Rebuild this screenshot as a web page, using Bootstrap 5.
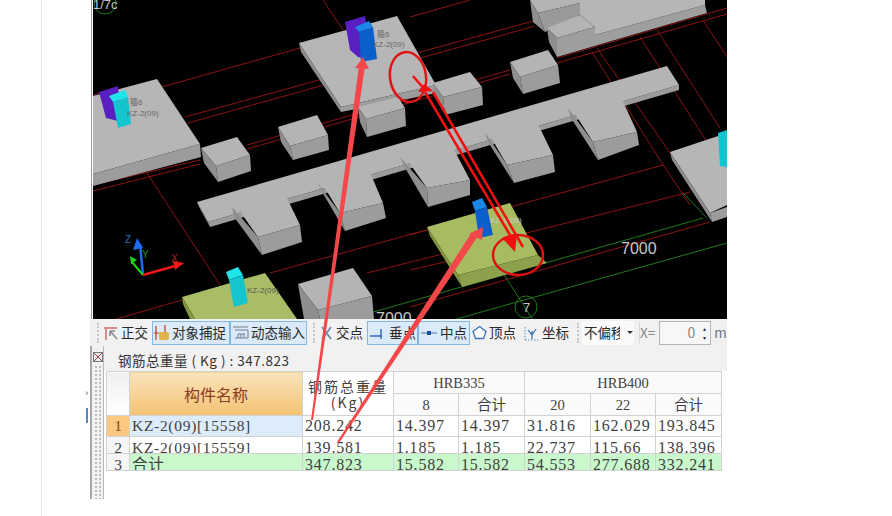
<!DOCTYPE html>
<html lang="zh-CN">

<head>
    <meta charset="UTF-8">
    <meta name="viewport" content="width=device-width, initial-scale=1.0">
    <title>钢筋总重量</title>
    <link href="https://cdn.jsdelivr.net/npm/bootstrap@5.3.0/dist/css/bootstrap.min.css" rel="stylesheet">
    <style>
        body { background: #fff; overflow: hidden; font-family: "Noto Sans CJK SC", "Liberation Sans", sans-serif; }
        .page-wrap { width: 892px; height: 516px; position: relative; }
        .left-gutter { width: 42px; border-right: 1px solid #e8e8e8; }
        .side-rail { width: 48px; padding-top: 388px; }
        .rail-arrow { font-size: 9px; line-height: 10px; color: #444; margin-right: 2px; height: 16px; }
        .rail-tick { width: 2px; height: 15px; background: #5b86bd; margin-right: 2px; margin-top: 4px; }
        .app-pane { width: 637px; height: 499px; overflow: hidden; background: #fff; }
        .scene-box { height: 319px; margin-left: 1px; border-left: 1px solid #9a9a9a; padding-left: 1px; background: #fff; }
        .scene-box svg { display: block; background: #000; }
        .scene-box text { font-family: "Liberation Sans", "Noto Sans CJK SC", sans-serif; }
        .tool-row { height: 27px; background: #f1f1f1; padding-left: 7px; color: #2a2a2a; font-size: 13.5px; white-space: nowrap; overflow: hidden; }
        .grip { width: 3px; height: 20px; border-left: 2px dotted #c4c4c4; flex: none; }
        .tool-item { height: 24px; display: inline-flex; align-items: center; gap: 2px; padding: 0 1px; font-size: 13.5px; line-height: 1; color: #2a2a2a; border: 1px solid transparent; flex: none; }
        .tool-on { background: #dbeaf8; border-color: #82b8e6; }
        .w-catch { width: 78px; }
        .w-input { width: 77px; }
        .w-foot { width: 51px; }
        .w-mid { width: 52px; }
        .sp-1 { margin-left: 1px; }
        .sp-2 { margin-left: 2px; }
        .sp-3 { margin-left: 3px; }
        .sp-4 { margin-left: 4px; }
        .sp-5 { margin-left: 5px; }
        .sp-6 { margin-left: 6px; }
        .offset-pick { width: 52px; height: 24px; background: #fafafa; padding-left: 2px; overflow: hidden; flex: none; }
        .offset-pick span { width: 36px; overflow: hidden; flex: none; }
        .offset-pick i { border-top: 3px solid #333; border-left: 3px solid transparent; border-right: 3px solid transparent; margin-left: 7px; }
        .x-label { border-left: 1px solid #d8d8d8; color: #8a8a8a; }
        .spin-box { width: 52px; height: 24px; border: 1px solid #b5b5b5; background: #f7f7f7; color: #888; font-size: 14px; flex: none; }
        .spin-arrows { width: 11px; font-size: 6px; line-height: 9px; color: #333; text-align: center; }
        .body-pane { height: 153px; }
        .dot-strip { width: 14px; background: #f1f1f1; border-left: 2px solid #a8a8a8; border-right: 1px solid #b8b8b8; flex: none; }
        .dot-fill { flex: 1; margin: 0 2px; background-image: radial-gradient(#bdbdbd 1px, transparent 1px); background-size: 4px 4px; }
        .strip-icon { height: 19px; padding-top: 6px; }
        .sum-title { height: 25px; background: #f1f1f1; font-size: 13.5px; padding-left: 14px; color: #333; letter-spacing: .5px; padding-top: 4px; width: 623px; line-height: 20px; }
        .sheet-wrap { padding-left: 2px; background: #fff; height: 128px; }
        .sheet { width: 615px; table-layout: fixed; font-family: "Liberation Serif", "Noto Sans CJK SC", serif; border-color: #d2d2d2; margin: 0; }
        .sheet > :not(caption) > * > * { padding: 0; font-size: 15.5px; color: #3f3f3f; line-height: 20px; text-align: center; vertical-align: middle; }
        .sheet td.num-cell { text-align: left; padding-left: 2px; font-size: 16px; letter-spacing: .8px; }
        .sheet td.label-cell { text-align: left; padding-left: 2px; letter-spacing: .7px; }
        .sheet tbody tr { height: 20px; }
        .sheet tbody tr.clip-row { height: 16px; }
        .sheet .clip-cell { height: 16px; overflow: hidden; line-height: 22px; }
        .sheet .blank-head { background: linear-gradient(#f0f0f0, #fff); }
        .sheet .name-head { background: linear-gradient(#fbe3ba, #f3c274); color: #8c3c20; font-size: 16px; font-family: "Noto Sans CJK SC", sans-serif; }
        .sheet .total-head { background: #fff; font-size: 14px; line-height: 16px; font-family: "Noto Sans CJK SC", serif; letter-spacing: 2px; }
        .sheet .group-head { background: #fafafa; font-size: 14.5px; }
        .sheet .row-active { background: #fcc983; color: #8c3c20; }
        .sheet .row-index { background: #f6f6f6; }
        .sheet .name-active { background: #dcecfb; }
        .sheet .sum-row { background: #c9f8cd; }
        .note-layer { position: absolute; top: 0; left: 0; pointer-events: none; }
    </style>
</head>

<body>
    <div class="page-wrap d-flex">
        <div class="left-gutter"></div>
        <div class="side-rail d-flex flex-column align-items-end">
            <div class="rail-arrow">›</div>
            <div class="rail-tick"></div>
        </div>
        <div class="app-pane">
            <!-- vista 3D -->
            <div class="scene-box">
                <svg width="634" height="319" viewBox="93 0 634 319">
                    <!-- rejilla -->
                    <g stroke="#8c1414" stroke-width="1" fill="none">
                        <path d="M162 87L300 48M185 117L533 21M188 123L535 26M247 145L510 70M247 149L510 74M323 0L343 30M410 17L470 0" />
                        <path d="M557 58L727 8M557 63L727 14M592 52L660 160M597 48L675 160M640 37L707 142M657 30L720 128M703 20L727 57" />
                        <path d="M147 173L220 285M93 185L200 160M93 191L200 164M270 273L663 165M367 273L690 192M410 235L427 230M410 270L453 260M113 320L182 300M410 307L710 222" />
                        <path d="M93 96L100 92M690 190L727 180M660 160L690 205" />
                    </g>
                    <g stroke="#1f7a1f" stroke-width="1" fill="none">
                        <path d="M370 313L703 218M453 320L727 243M503 273L533 320M683 193L707 218M280 300L300 325" />
                        <circle cx="526" cy="307" r="11" />
                        <circle cx="105" cy="3" r="11" />
                    </g>
                    <!-- losa arriba derecha -->
                    <polygon points="530,0 580,0 580,3 538,13" fill="#b4b4b4" />
                    <polygon points="538,13 580,3 580,15 545,32" fill="#9a9a9a" />
                    <polygon points="530,0 538,13 545,32 533,22" fill="#8e8e8e" />
                    <polygon points="547,28 580,15 595,27 557,38" fill="#b4b4b4" />
                    <polygon points="547,28 557,38 557,57 549,42" fill="#8e8e8e" />
                    <polygon points="557,38 595,27 595,35 705,5 707,13 557,57" fill="#9e9e9e" />
                    <polygon points="580,0 705,0 705,5 595,35 595,27 580,15" fill="#b6b6b6" />
                    <!-- losa izquierda -->
                    <polygon points="93,96 157,79 200,144 93,174" fill="#b6b6b6" />
                    <polygon points="93,174 200,144 201,157 93,186" fill="#9c9c9c" />
                    <!-- losa centro arriba -->
                    <polygon points="299,43 397,16 436,85 341,107" fill="#b6b6b6" />
                    <polygon points="299,43 341,107 341,112 301,52" fill="#8e8e8e" />
                    <polygon points="341,107 436,85 437,93 341,112" fill="#9c9c9c" />
                    <!-- cajas -->
                    <g>
                        <polygon points="201,148 237,137 250,155 216,166" fill="#b4b4b4" />
                        <polygon points="201,148 216,166 218,182 204,163" fill="#8e8e8e" />
                        <polygon points="216,166 250,155 251,171 218,182" fill="#9c9c9c" />
                        <polygon points="278,127 317,115 328,135 290,146" fill="#b4b4b4" />
                        <polygon points="278,127 290,146 293,160 281,142" fill="#8e8e8e" />
                        <polygon points="290,146 328,135 329,150 293,160" fill="#9c9c9c" />
                        <polygon points="358,107 398,97 405,108 366,119" fill="#b4b4b4" />
                        <polygon points="358,107 366,119 367,137 360,122" fill="#8e8e8e" />
                        <polygon points="366,119 405,108 406,126 367,137" fill="#9c9c9c" />
                        <polygon points="433,83 470,72 482,87 443,97" fill="#b4b4b4" />
                        <polygon points="433,83 443,97 445,115 436,98" fill="#8e8e8e" />
                        <polygon points="443,97 482,87 483,105 445,115" fill="#9c9c9c" />
                        <polygon points="510,62 548,50 558,65 520,77" fill="#b4b4b4" />
                        <polygon points="510,62 520,77 523,94 513,78" fill="#8e8e8e" />
                        <polygon points="520,77 558,65 560,83 523,94" fill="#9c9c9c" />
                    </g>
                    <!-- viga en peine -->
                    <polygon points="208,222 679,85 679,90 210,227" fill="#9c9c9c" />
                    <polygon points="197,202 667,66 679,85 208,222" fill="#b4b4b4" />
                    <polygon points="197,202 208,222 210,227 199,207" fill="#8e8e8e" />
                    <g fill="#8e8e8e">
                        <polygon points="232,207 258,237 262,255 234,217" />
                        <polygon points="317,182 340,213 345,231 321,190" />
                        <polygon points="400,157 427,188 428,207 404,166" />
                        <polygon points="485,132 507,165 514,183 488,142" />
                        <polygon points="568,108 593,142 598,160 571,118" />
                    </g>
                    <g fill="#b4b4b4">
                        <polygon points="232,200 283,190 300,225 258,237" />
                        <polygon points="317,175 367,165 383,203 340,213" />
                        <polygon points="400,150 450,142 470,180 427,188" />
                        <polygon points="485,127 535,118 553,155 507,165" />
                        <polygon points="568,103 620,95 637,132 593,142" />
                    </g>
                    <g fill="#9c9c9c">
                        <polygon points="258,237 300,225 302,242 262,255" />
                        <polygon points="340,213 383,203 386,218 345,231" />
                        <polygon points="427,188 470,180 470,195 428,207" />
                        <polygon points="507,165 553,155 555,172 514,183" />
                        <polygon points="593,142 637,132 639,145 598,160" />
                    </g>
                    <!-- losa derecha -->
                    <polygon points="670,152 727,133 727,205 710,213" fill="#b6b6b6" />
                    <polygon points="670,152 710,213 712,222 672,160" fill="#8e8e8e" />
                    <polygon points="710,213 727,207 727,217 712,222" fill="#9c9c9c" />
                    <!-- zapatas verdes -->
                    <polygon points="427,227 510,203 538,255 458,275" fill="#a7bc61" />
                    <polygon points="427,227 458,275 462,287 430,236" fill="#84983f" />
                    <polygon points="458,275 538,255 547,263 462,287" fill="#8da14c" />
                    <polygon points="182,297 265,273 297,319 195,319" fill="#a9bd66" />
                    <polygon points="182,297 195,319 190,319 183,304" fill="#84983f" />
                    <polygon points="298,284 353,268 372,296 318,310" fill="#b4b4b4" />
                    <polygon points="298,284 318,310 320,319 304,319" fill="#8e8e8e" />
                    <polygon points="318,310 372,296 374,319 320,319" fill="#9c9c9c" />
                    <!-- pilares -->
                    <polygon points="345,22 365,16 372,60 358,57 350,50" fill="#5a1fc0" />
                    <polygon points="355,27 369,21 373,27 359,32" fill="#1a86e8" />
                    <polygon points="359,32 373,27 377,59 361,62" fill="#0a5fcb" />
                    <polygon points="99,92 118,86 122,122 106,118" fill="#5a1fc0" />
                    <polygon points="109,96 125,90 128,97 113,102" fill="#1fe4ea" />
                    <polygon points="113,102 128,97 131,124 118,128" fill="#14c5cf" />
                    <polygon points="226,272 238,267 243,275 229,280" fill="#1fe4ea" />
                    <polygon points="229,280 243,275 248,303 234,307" fill="#14c5cf" />
                    <polygon points="472,202 482,198 487,207 475,211" fill="#1a86e8" />
                    <polygon points="475,211 487,207 493,235 479,238" fill="#0a5fcb" />
                    <polygon points="718,133 727,130 727,167 720,166" fill="#14c5cf" />
                    <!-- etiquetas -->
                    <g fill="#666" font-size="8">
                        <text x="377" y="37">箍6</text>
                        <text x="373" y="47">KZ-2(09)</text>
                        <text x="130" y="105">箍6</text>
                        <text x="127" y="116">KZ-2(09)</text>
                        <text x="247" y="293" fill="#555">KZ-2(09)</text>
                    </g>
                    <text x="490" y="223" fill="#ccc" font-size="8">KZ-2(09)</text>
                    <g fill="#c8c8c8">
                        <text x="621" y="254" font-size="16">7000</text>
                        <text x="376" y="324" font-size="16">7000</text>
                        <text x="523" y="312" font-size="13">7</text>
                        <text x="93" y="9" font-size="13">1/7c</text>
                    </g>
                    <!-- ejes -->
                    <g fill="none" stroke-width="2.5">
                        <path d="M143 275L140 244" stroke="#1a6cf0" />
                        <path d="M143 275L132 262" stroke="#19d419" stroke-width="2" />
                        <path d="M143 275L175 266" stroke="#f01818" />
                    </g>
                    <polygon points="137,238 133,250 143,248" fill="#1a6cf0" />
                    <polygon points="130,256 131,264 137,260" fill="#19d419" />
                    <polygon points="184,263 173,261 175,270" fill="#f01818" />
                    <g font-size="10">
                        <text x="125" y="243" fill="#2b6fc0">Z</text>
                        <text x="142" y="258" fill="#2a8c2a">Y</text>
                        <text x="171" y="262" fill="#b02020">X</text>
                    </g>
                </svg>
            </div>

            <!-- barra de herramientas -->
            <div class="tool-row d-flex align-items-center">
                <span class="grip"></span>
                <span class="tool-item sp-1">
                    <svg width="16" height="16" viewBox="0 0 16 16"><path d="M1 3H14M3 3V15" stroke="#d98a8a" stroke-width="2" fill="none"/><path d="M7 6L14 14M7 6V11M7 6H12" stroke="#8a8a8a" stroke-width="1.6" fill="none"/></svg>
                    <span>正交</span>
                </span>
                <span class="tool-item tool-on w-catch sp-2">
                    <svg width="16" height="18" viewBox="0 0 16 18"><path d="M2 2V16M0 9H5M11 1V8" stroke="#c0392b" stroke-width="1.2" fill="none"/><rect x="5" y="8" width="10" height="8" rx="2" fill="#e3b24a"/></svg>
                    <span>对象捕捉</span>
                </span>
                <span class="tool-item tool-on w-input">
                    <svg width="17" height="15" viewBox="0 0 17 15"><path d="M1 2H16M3 5H16V13H3M6 9V13M9 9V13M12 9V13M6 9H13" stroke="#6f7f8f" stroke-width="1" fill="none"/></svg>
                    <span>动态输入</span>
                </span>
                <span class="grip sp-6"></span>
                <span class="tool-item sp-1">
                    <svg width="15" height="16" viewBox="0 0 15 16"><path d="M3 2L12 14M12 2L3 14" stroke="#6f8fb5" stroke-width="2" fill="none"/></svg>
                    <span>交点</span>
                </span>
                <span class="tool-item tool-on w-foot sp-2">
                    <svg width="18" height="16" viewBox="0 0 18 16"><path d="M1 11H13M12 4V14" stroke="#2f68b5" stroke-width="1.4" fill="none"/></svg>
                    <span>垂点</span>
                </span>
                <span class="tool-item tool-on w-mid">
                    <svg width="18" height="16" viewBox="0 0 18 16"><path d="M1 8H17" stroke="#5d86bd" stroke-width="1.2"/><rect x="7" y="6" width="4" height="4" fill="#1c4f9c"/></svg>
                    <span>中点</span>
                </span>
                <span class="tool-item">
                    <svg width="15" height="15" viewBox="0 0 15 15"><polygon points="7.5,1.5 14,6.5 11.5,13.5 3.5,13.5 1,6.5" fill="#fff" stroke="#3a72b5" stroke-width="1.3"/></svg>
                    <span>顶点</span>
                </span>
                <span class="tool-item sp-3">
                    <svg width="17" height="16" viewBox="0 0 17 16"><path d="M2 2V15M2 15H15" stroke="#4f8fc0" stroke-width="1" stroke-dasharray="1.5 1.5" fill="none"/><path d="M9 6V14M5 5L9 10L13 4" stroke="#2f6fb0" stroke-width="1.2" fill="none"/></svg>
                    <span>坐标</span>
                </span>
                <span class="grip sp-6"></span>
                <div class="offset-pick d-flex align-items-center sp-2">
                    <span>不偏移</span><i></i>
                </div>
                <span class="x-label sp-5">X=</span>
                <div class="spin-box d-flex align-items-center justify-content-end sp-4">
                    <span class="me-1">0</span>
                    <div class="spin-arrows">▴<br>▾</div>
                </div>
                <span class="sp-3 text-secondary">m</span>
            </div>

            <!-- panel de resultados -->
            <div class="body-pane d-flex">
                <div class="dot-strip d-flex flex-column">
                    <div class="strip-icon d-flex justify-content-center">
                        <svg width="10" height="10" viewBox="0 0 10 10"><rect x=".5" y=".5" width="9" height="9" fill="#eee" stroke="#777"/><path d="M1 1L9 9M9 1L1 9" stroke="#a04040"/></svg>
                    </div>
                    <div class="dot-fill"></div>
                </div>
                <div class="flex-grow-1">
                    <div class="sum-title">钢筋总重量 ( Kg ) : 347.823</div>
                    <div class="sheet-wrap">
                        <table class="table table-bordered sheet">
                            <colgroup>
                                <col style="width:23px"><col style="width:173px"><col style="width:91px"><col style="width:65px"><col style="width:66px"><col style="width:66px"><col style="width:65px"><col style="width:66px">
                            </colgroup>
                            <thead>
                                <tr style="height:22px">
                                    <th rowspan="2" class="blank-head"></th>
                                    <th rowspan="2" class="name-head fw-normal">构件名称</th>
                                    <th rowspan="2" class="total-head fw-normal">钢筋总重量<br>(Kg)</th>
                                    <th colspan="2" class="group-head fw-normal">HRB335</th>
                                    <th colspan="3" class="group-head fw-normal">HRB400</th>
                                </tr>
                                <tr style="height:22px">
                                    <th class="group-head fw-normal">8</th>
                                    <th class="group-head fw-normal">合计</th>
                                    <th class="group-head fw-normal">20</th>
                                    <th class="group-head fw-normal">22</th>
                                    <th class="group-head fw-normal">合计</th>
                                </tr>
                            </thead>
                            <tbody>
                                <tr>
                                    <td class="row-active">1</td>
                                    <td class="label-cell name-active">KZ-2(09)[15558]</td>
                                    <td class="num-cell">208.242</td>
                                    <td class="num-cell">14.397</td>
                                    <td class="num-cell">14.397</td>
                                    <td class="num-cell">31.816</td>
                                    <td class="num-cell">162.029</td>
                                    <td class="num-cell">193.845</td>
                                </tr>
                                <tr class="clip-row">
                                    <td class="row-index"><div class="clip-cell">2</div></td>
                                    <td class="label-cell"><div class="clip-cell">KZ-2(09)[15559]</div></td>
                                    <td class="num-cell"><div class="clip-cell">139.581</div></td>
                                    <td class="num-cell"><div class="clip-cell">1.185</div></td>
                                    <td class="num-cell"><div class="clip-cell">1.185</div></td>
                                    <td class="num-cell"><div class="clip-cell">22.737</div></td>
                                    <td class="num-cell"><div class="clip-cell">115.66</div></td>
                                    <td class="num-cell"><div class="clip-cell">138.396</div></td>
                                </tr>
                                <tr class="clip-row">
                                    <td class="row-index"><div class="clip-cell">3</div></td>
                                    <td class="label-cell sum-row"><div class="clip-cell">合计</div></td>
                                    <td class="num-cell sum-row"><div class="clip-cell">347.823</div></td>
                                    <td class="num-cell sum-row"><div class="clip-cell">15.582</div></td>
                                    <td class="num-cell sum-row"><div class="clip-cell">15.582</div></td>
                                    <td class="num-cell sum-row"><div class="clip-cell">54.553</div></td>
                                    <td class="num-cell sum-row"><div class="clip-cell">277.688</div></td>
                                    <td class="num-cell sum-row"><div class="clip-cell">332.241</div></td>
                                </tr>
                            </tbody>
                        </table>
                    </div>
                </div>
            </div>
        </div>

        <!-- anotaciones en rojo encima de todo -->
        <svg class="note-layer" width="892" height="516" viewBox="0 0 892 516">
            <polygon points="311,420 313,420 365,66 359,66" fill="#f4474a" />
            <polygon points="363,57 355,68 369,69" fill="#f4474a" />
            <polygon points="337,442 339,443 478,236 472,232" fill="#f4474a" />
            <polygon points="483,227 469,234 482,240" fill="#f4474a" />
            <ellipse cx="408" cy="77" rx="18" ry="25" transform="rotate(-8 408 77)" fill="none" stroke="#e01414" stroke-width="2.5" />
            <ellipse cx="518" cy="255" rx="25" ry="20" fill="none" stroke="#dc1212" stroke-width="2.5" />
            <path d="M425 92L513 240M433 92L523 247M413 76L425 90" stroke="#f01010" stroke-width="2.5" fill="none" />
            <polygon points="424,84 418,92 433,91" fill="#f01010" />
            <polygon points="515,252 502,238 517,234" fill="#f01010" />
        </svg>
    </div>

    <script src="https://cdn.jsdelivr.net/npm/bootstrap@5.3.0/dist/js/bootstrap.bundle.min.js"></script>
</body>

</html>
